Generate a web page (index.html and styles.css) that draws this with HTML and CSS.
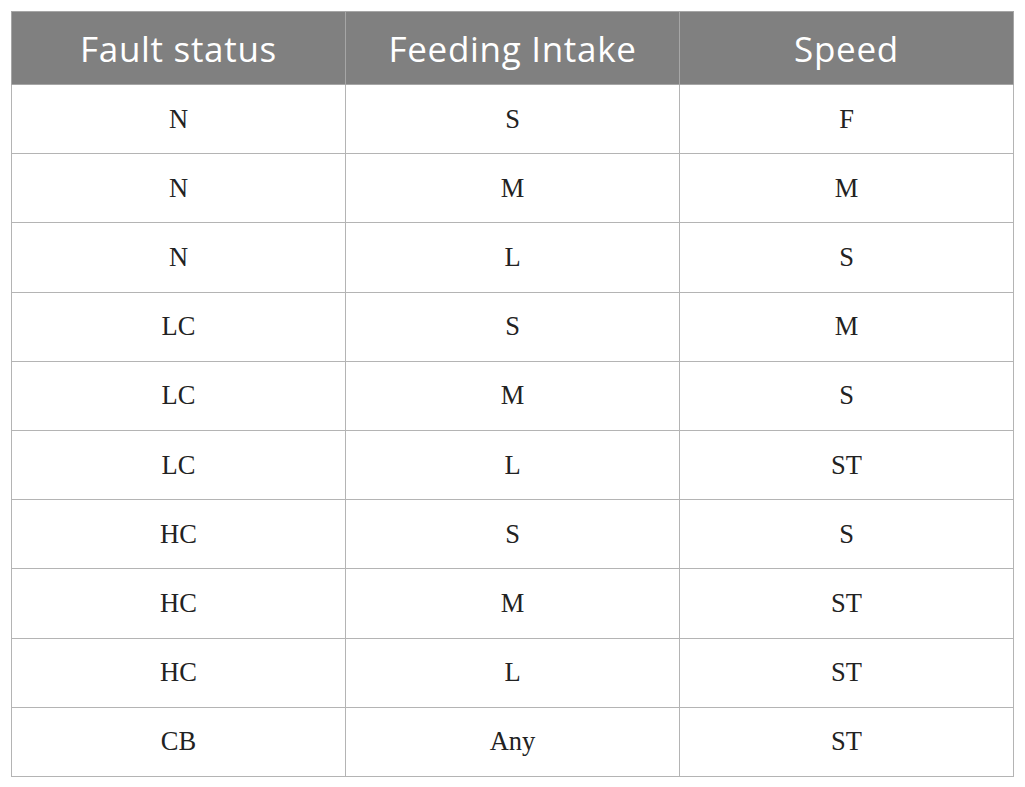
FILE: index.html
```html
<!DOCTYPE html>
<html>
<head>
<meta charset="utf-8">
<link rel="stylesheet" href="styles.css">
</head>
<body>
<table class="data">
  <thead>
    <tr><th>Fault status</th><th>Feeding Intake</th><th>Speed</th></tr>
  </thead>
  <tbody>
    <tr><td>N</td><td>S</td><td>F</td></tr>
    <tr><td>N</td><td>M</td><td>M</td></tr>
    <tr><td>N</td><td>L</td><td>S</td></tr>
    <tr><td>LC</td><td>S</td><td>M</td></tr>
    <tr><td>LC</td><td>M</td><td>S</td></tr>
    <tr><td>LC</td><td>L</td><td>ST</td></tr>
    <tr><td>HC</td><td>S</td><td>S</td></tr>
    <tr><td>HC</td><td>M</td><td>ST</td></tr>
    <tr><td>HC</td><td>L</td><td>ST</td></tr>
    <tr><td>CB</td><td>Any</td><td>ST</td></tr>
  </tbody>
</table>
</body>
</html>
```

FILE: styles.css
```css
html, body {
  margin: 0;
  padding: 0;
  background: #ffffff;
}
body {
  padding: 11px 11px 0 11px;
}
.data {
  border-collapse: collapse;
  width: 1003px;
  table-layout: fixed;
}
.data th {
  background: #808080;
  color: #ffffff;
  font-family: "Open Sans", "Liberation Sans", sans-serif;
  font-weight: 400;
  font-size: 35px;
  letter-spacing: 0.7px;
  height: 72px;
  padding: 0;
  border: 1px solid #a6a6a6;
  text-align: center;
  vertical-align: middle;
}
.data td {
  font-family: "Liberation Serif", serif;
  font-size: 26.5px;
  color: #222222;
  height: 68.2px;
  padding: 0;
  border: 1px solid #b4b4b4;
  text-align: center;
  vertical-align: middle;
}
```
